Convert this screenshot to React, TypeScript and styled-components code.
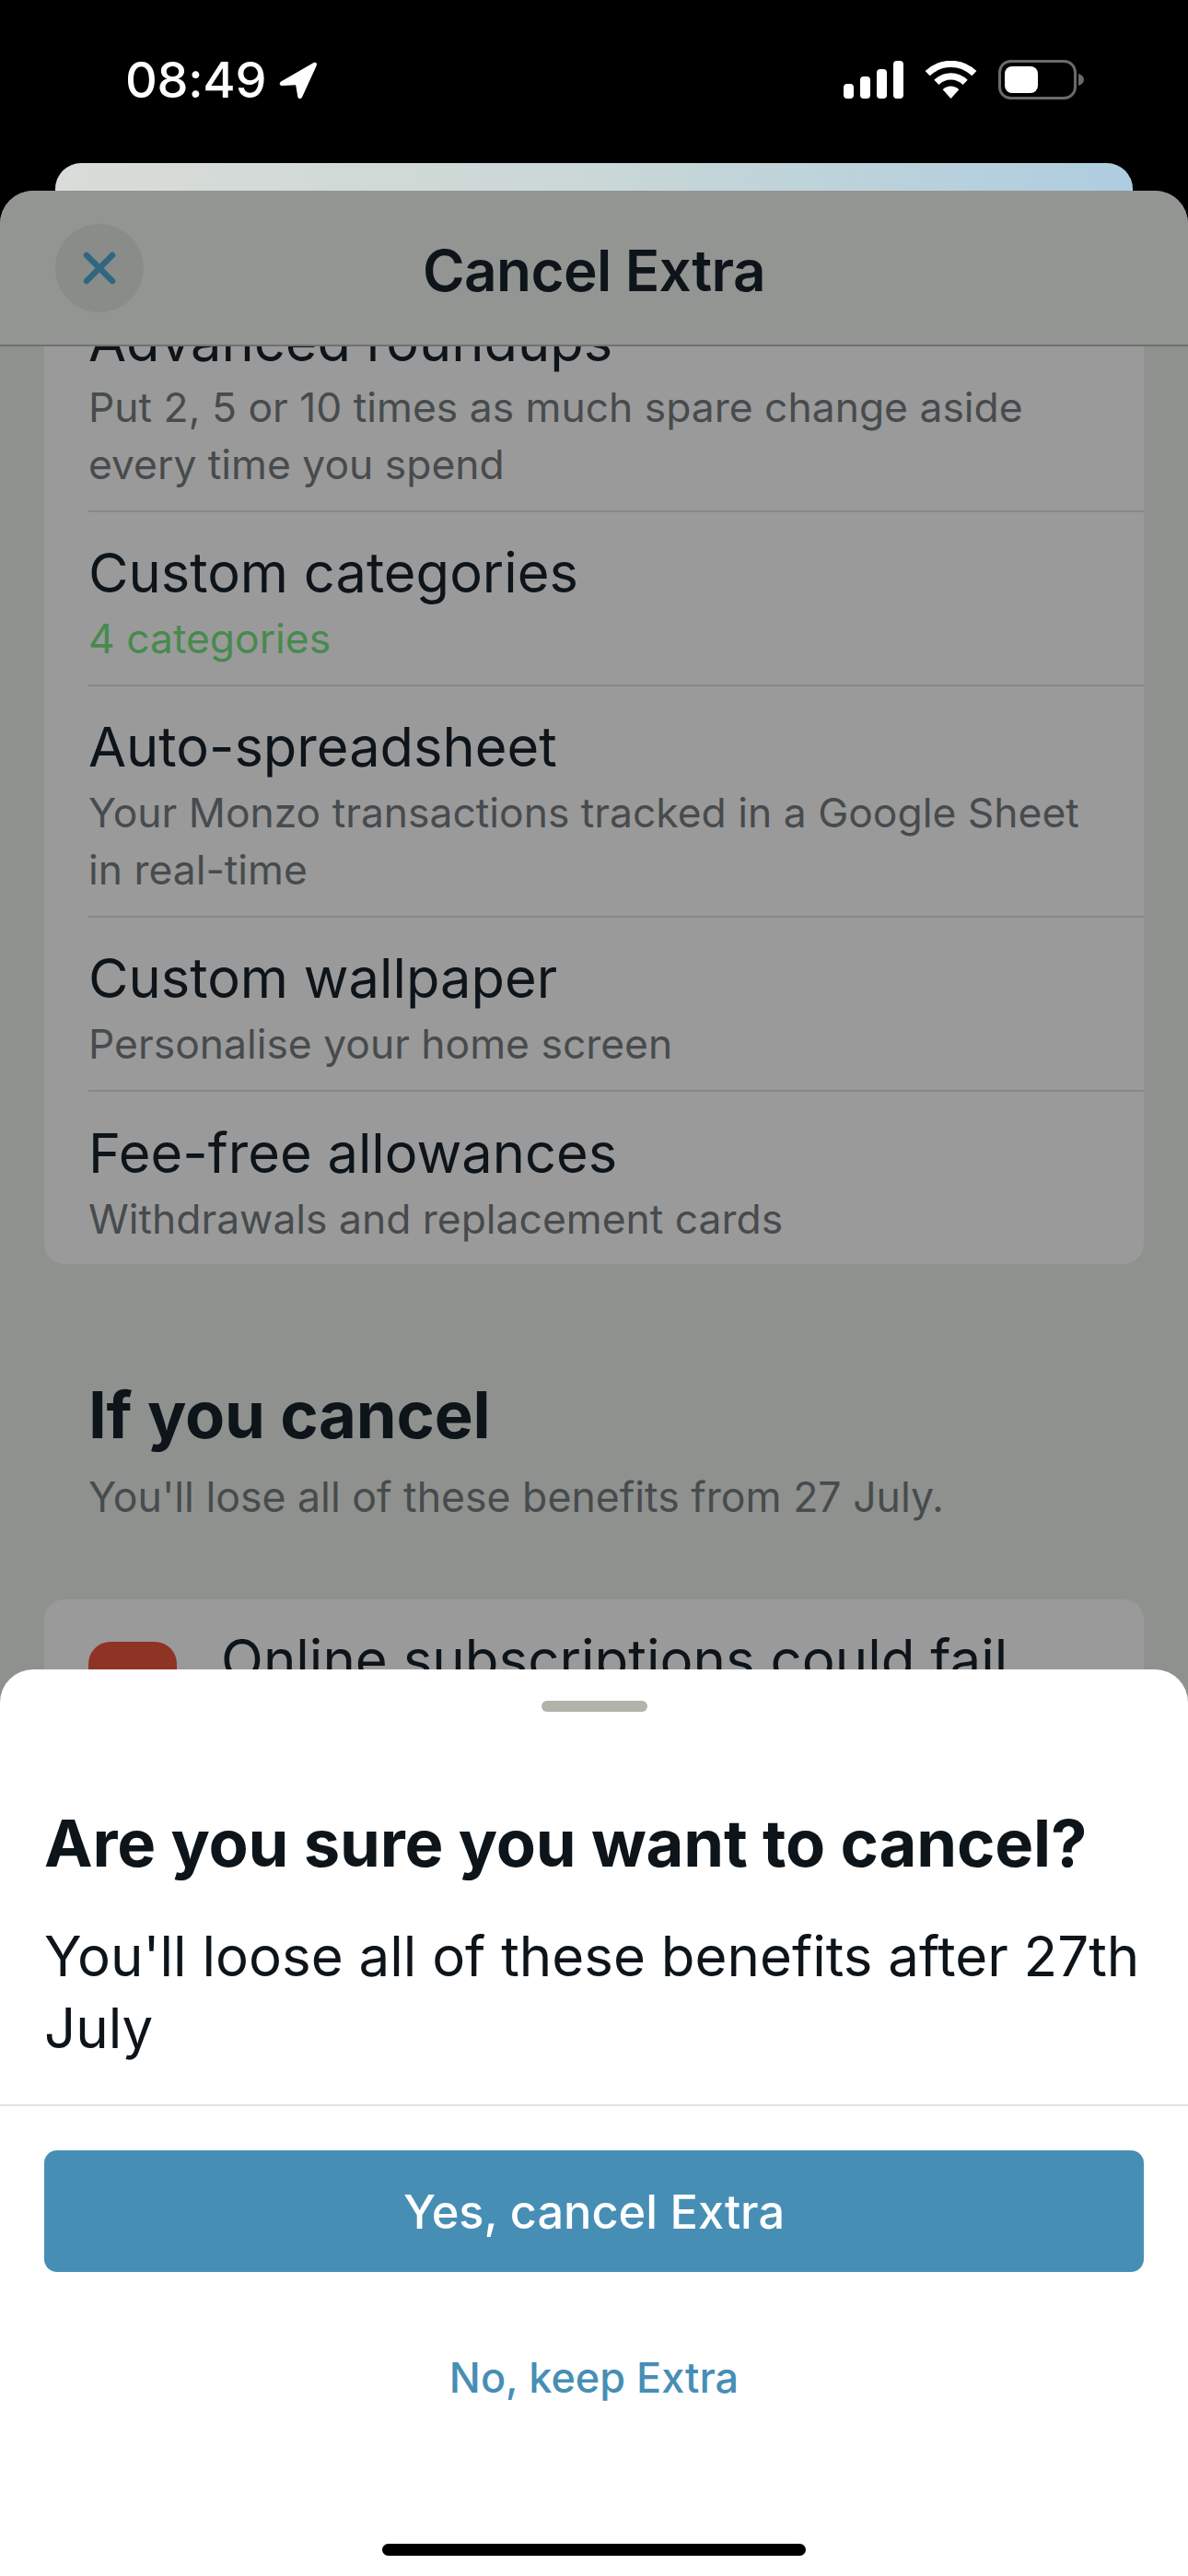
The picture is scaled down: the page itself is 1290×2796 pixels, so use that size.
import React from 'react';
import styled, { createGlobalStyle } from 'styled-components';

const GlobalStyle = createGlobalStyle`
  html, body {
    margin: 0;
    padding: 0;
    background: #000;
  }
  * {
    box-sizing: border-box;
  }
`;

const FONT = `Inter, "Liberation Sans", sans-serif`;
const INK = '#0d141a';
const MUTED = '#474b4d';
const BLUE = '#478eb5';

const Screen = styled.div`
  position: relative;
  display: flex;
  flex-direction: column;
  width: 1290px;
  height: 2796px;
  overflow: hidden;
  background: #000;
  font-family: ${FONT};
`;

const StatusBar = styled.div`
  display: flex;
  align-items: center;
  justify-content: space-between;
  height: 177px;
  padding: 0 113px 4px 136px;
  flex: none;
`;

const Time = styled.div`
  display: flex;
  align-items: center;
  gap: 13px;
  color: #fff;
  font-size: 54px;
  font-weight: 500;
  letter-spacing: -0.3px;
`;

const StatusIcons = styled.div`
  display: flex;
  align-items: center;
  gap: 23px;
`;

const BackCard = styled.div`
  flex: none;
  height: 40px;
  margin: 0 60px -10px;
  border-radius: 28px 28px 0 0;
  background: linear-gradient(90deg, #d9dcd8 0%, #ccd8d6 45%, #aecde0 100%);
`;

const Sheet = styled.div`
  flex: 1;
  display: flex;
  flex-direction: column;
  min-height: 0;
  overflow: hidden;
  border-radius: 36px 36px 0 0;
  background: #8f918e;
  position: relative;
`;

const Header = styled.div`
  flex: none;
  position: relative;
  z-index: 1;
  display: flex;
  align-items: center;
  justify-content: center;
  height: 169px;
  padding-top: 6px;
  background: #939592;
  border-bottom: 2px solid #6f716f;
`;

const CloseButton = styled.div`
  position: absolute;
  left: 60px;
  top: 36px;
  display: flex;
  align-items: center;
  justify-content: center;
  width: 96px;
  height: 96px;
  border-radius: 50%;
  background: #8a8c89;
`;

const HeaderTitle = styled.div`
  color: ${INK};
  font-size: 62px;
  font-weight: 600;
  letter-spacing: -0.6px;
`;

const Scroller = styled.div`
  flex: 1;
  min-height: 0;
  margin-top: -71px;
  padding: 0 48px;
  display: flex;
  flex-direction: column;
`;

const ListCard = styled.div`
  flex: none;
  border-radius: 22px;
  background: #9a9a9a;
`;

const Row = styled.div<{ $last?: boolean }>`
  margin-left: 48px;
  padding: ${(p) => (p.$last ? '27px 48px 18px 0' : '26px 48px 19px 0')};
  border-bottom: ${(p) => (p.$last ? 'none' : '2px solid #878887')};
`;

const RowTitle = styled.div`
  color: ${INK};
  font-size: 59.6px;
  line-height: 78px;
  font-weight: 400;
`;

const RowSub = styled.div<{ $accent?: boolean }>`
  margin-top: 2px;
  color: ${(p) => (p.$accent ? '#478a4e' : MUTED)};
  font-size: 44.4px;
  line-height: 62px;
  font-weight: 400;
`;

const Section = styled.div`
  flex: none;
  padding: 122px 48px 80px;
`;

const SectionTitle = styled.div`
  color: ${INK};
  font-size: 70.5px;
  line-height: 84px;
  font-weight: 700;
  letter-spacing: -0.2px;
`;

const SectionSub = styled.div`
  margin-top: 16px;
  color: ${MUTED};
  font-size: 44.6px;
  line-height: 62px;
`;

const LossCard = styled.div`
  flex: none;
  display: flex;
  gap: 48px;
  height: 300px;
  padding: 46px 48px;
  border-radius: 22px;
  background: #9a9a9a;
`;

const LossIcon = styled.div`
  flex: none;
  width: 96px;
  height: 96px;
  border-radius: 24px;
  background: #8f3325;
`;

const LossTitle = styled.div`
  color: ${INK};
  font-size: 60px;
  line-height: 70px;
  margin-top: -16px;
`;

const BottomSheet = styled.div`
  position: absolute;
  left: 0;
  right: 0;
  bottom: 0;
  height: 984px;
  display: flex;
  flex-direction: column;
  border-radius: 36px 36px 0 0;
  background: #fff;
`;

const Handle = styled.div`
  flex: none;
  width: 115px;
  height: 12px;
  margin: 34px auto 0;
  border-radius: 6px;
  background: #b1b5a9;
`;

const DialogTitle = styled.div`
  margin: 101px 48px 0;
  color: ${INK};
  font-size: 70.5px;
  line-height: 84px;
  font-weight: 700;
  letter-spacing: -0.2px;
`;

const DialogText = styled.div`
  margin: 41px 48px 0;
  color: ${INK};
  font-size: 60px;
  line-height: 78px;
`;

const Divider = styled.div`
  flex: none;
  height: 2px;
  margin-top: 44px;
  background: #e2e2e2;
`;

const PrimaryButton = styled.div`
  display: flex;
  align-items: center;
  justify-content: center;
  height: 132px;
  margin: 48px 48px 0;
  border-radius: 14px;
  background: ${BLUE};
  color: #fff;
  font-size: 50.5px;
  font-weight: 500;
`;

const SecondaryButton = styled.div`
  display: flex;
  align-items: center;
  justify-content: center;
  height: 132px;
  margin: 48px 48px 0;
  color: ${BLUE};
  font-size: 45px;
  font-weight: 500;
`;

const HomeIndicator = styled.div`
  position: absolute;
  left: 415px;
  bottom: 22px;
  width: 460px;
  height: 13px;
  border-radius: 7px;
  background: #000;
`;

export default function App() {
  return (
    <Screen>
      <GlobalStyle />
      <StatusBar>
        <Time>
          08:49
          <svg width="45" height="44" viewBox="0 0 42 42">
            <path
              d="M2.5 22.5 L36 3.2 C38.6 1.8 40.4 3.6 39.2 6.2 L24.5 38.5 C23.3 41 20.2 40.6 19.8 38 L17.8 26 L4 26.8 C1 27 0.2 24 2.5 22.5 Z"
              fill="#fff"
            />
          </svg>
        </Time>
        <StatusIcons>
          <svg width="65" height="41" viewBox="0 0 65 41">
            <rect x="0" y="25" width="11" height="16" rx="4" fill="#fff" />
            <rect x="18" y="17" width="11" height="24" rx="4" fill="#fff" />
            <rect x="36" y="9" width="11" height="32" rx="4" fill="#fff" />
            <rect x="54" y="0" width="11" height="41" rx="4" fill="#fff" />
          </svg>
          <svg width="57" height="41" viewBox="0 0 58 42">
            <path d="M3 14 C18 0 40 0 55 14" fill="none" stroke="#fff" strokeWidth="7.5" />
            <path d="M13 24 C22 15 36 15 45 24" fill="none" stroke="#fff" strokeWidth="7.5" />
            <path d="M20 32 C25 27 33 27 38 32 L29 42 Z" fill="#fff" />
          </svg>
          <svg width="93" height="43" viewBox="0 0 93 43">
            <rect x="1.5" y="1.5" width="82" height="40" rx="12" fill="none" stroke="#6a6a6a" strokeWidth="3" />
            <rect x="7" y="7" width="36" height="29" rx="8" fill="#fff" />
            <path d="M87 15 C90.5 16 93 18.5 93 21.5 C93 24.5 90.5 27 87 28 Z" fill="#6a6a6a" />
          </svg>
        </StatusIcons>
      </StatusBar>
      <BackCard />
      <Sheet>
        <Header>
          <CloseButton>
            <svg width="36" height="36" viewBox="0 0 36 36">
              <path d="M4 4 L32 32 M32 4 L4 32" stroke="#2f6781" strokeWidth="6.5" strokeLinecap="round" />
            </svg>
          </CloseButton>
          <HeaderTitle>Cancel Extra</HeaderTitle>
        </Header>
        <Scroller>
          <ListCard>
            <Row>
              <RowTitle>Advanced roundups</RowTitle>
              <RowSub>Put 2, 5 or 10 times as much spare change aside every time you spend</RowSub>
            </Row>
            <Row>
              <RowTitle>Custom categories</RowTitle>
              <RowSub $accent>4 categories</RowSub>
            </Row>
            <Row>
              <RowTitle>Auto-spreadsheet</RowTitle>
              <RowSub>Your Monzo transactions tracked in a Google Sheet in real-time</RowSub>
            </Row>
            <Row>
              <RowTitle>Custom wallpaper</RowTitle>
              <RowSub>Personalise your home screen</RowSub>
            </Row>
            <Row $last>
              <RowTitle>Fee-free allowances</RowTitle>
              <RowSub>Withdrawals and replacement cards</RowSub>
            </Row>
          </ListCard>
          <Section>
            <SectionTitle>If you cancel</SectionTitle>
            <SectionSub>You'll lose all of these benefits from 27 July.</SectionSub>
          </Section>
          <LossCard>
            <LossIcon />
            <LossTitle>Online subscriptions could fail</LossTitle>
          </LossCard>
        </Scroller>
      </Sheet>
      <BottomSheet>
        <Handle />
        <DialogTitle>Are you sure you want to cancel?</DialogTitle>
        <DialogText>You'll loose all of these benefits after 27th July</DialogText>
        <Divider />
        <PrimaryButton>Yes, cancel Extra</PrimaryButton>
        <SecondaryButton>No, keep Extra</SecondaryButton>
      </BottomSheet>
      <HomeIndicator />
    </Screen>
  );
}
